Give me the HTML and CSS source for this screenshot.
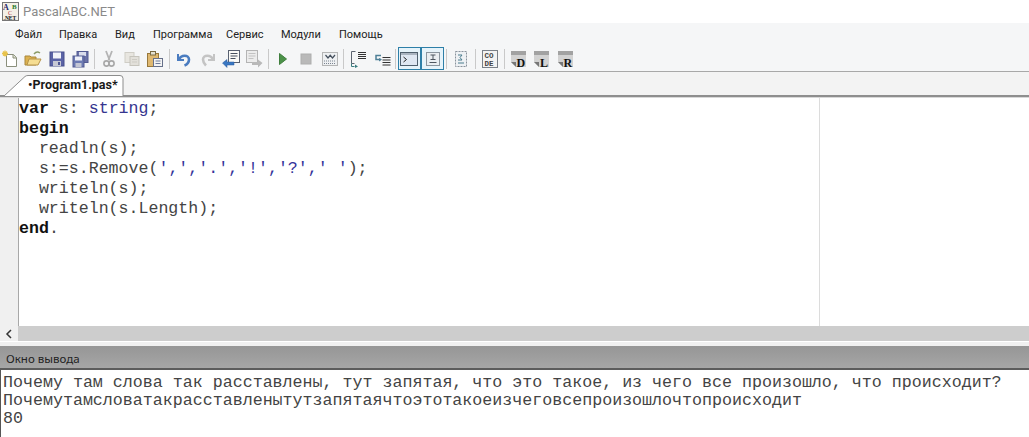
FILE: index.html
```html
<!DOCTYPE html>
<html lang="ru">
<head>
<meta charset="utf-8">
<title>PascalABC.NET</title>
<link rel="stylesheet" href="styles.css">
</head>
<body>
<div class="app">
  <header class="titlebar">
    <svg class="app-icon" width="18" height="19" viewBox="0 0 18 19">
      <rect x="0.5" y="0.5" width="16" height="18" fill="#f4f0e6" stroke="#777"/>
      <text x="1" y="8" class="logo-a">A</text>
      <text x="10" y="7" class="logo-b">B</text>
      <text x="6" y="13" class="logo-c">C</text>
      <text x="1.5" y="18" class="logo-net">.NET</text>
    </svg>
    <span class="app-name">PascalABC.NET</span>
  </header>

  <nav class="menubar">
    <span class="menu-item m1">Файл</span>
    <span class="menu-item m2">Правка</span>
    <span class="menu-item m3">Вид</span>
    <span class="menu-item m4">Программа</span>
    <span class="menu-item m5">Сервис</span>
    <span class="menu-item m6">Модули</span>
    <span class="menu-item m7">Помощь</span>
  </nav>

  <div class="toolbar">
    <span class="tool first"><svg width="18" height="18" viewBox="0 0 18 18"><path d="M5.500 4.500h7l3 3v9h-10z" fill="#fff" stroke="#8a8f7c"/><path d="M12 4.500v3.500h3.500" fill="#dfe3d0" stroke="#8a8f7c"/><path d="M4 .5v6M1 3.500h6M2 1.500l4 4M6 1.500l-4 4" stroke="#e8c34c" stroke-width="1.300"/></svg></span>
    <span class="tool"><svg width="18" height="18" viewBox="0 0 18 18"><path d="M1 6h5l1 1h5v8H1z" fill="#dcb150" stroke="#a8873c"/><path d="M3 15l2-6h12l-3 6z" fill="#f5dd92" stroke="#b5934a"/><path d="M10 4c2-2.500 4-2.500 6-1" fill="none" stroke="#8a9a68" stroke-width="1.400"/></svg></span>
    <span class="tool"><svg width="18" height="18" viewBox="0 0 18 18"><rect x="2" y="2" width="14" height="14" fill="#5a63a6" stroke="#474f8c"/><rect x="5" y="2.500" width="8" height="6" fill="#f2f4fa"/><rect x="5" y="11" width="8" height="5" fill="#c7c9d4"/><rect x="10" y="12" width="2" height="3" fill="#505894"/></svg></span>
    <span class="tool"><svg width="18" height="18" viewBox="0 0 18 18"><rect x="6" y="1.500" width="11" height="11" fill="#6a72a8" stroke="#525a92"/><rect x="8" y="2" width="7" height="4" fill="#d8dcec"/><rect x="2" y="6" width="11" height="11" fill="#6c7ab2" stroke="#525a92"/><rect x="4" y="6.500" width="7" height="4" fill="#eef0f8"/><rect x="4.500" y="13" width="6" height="4" fill="#c3c6d4"/></svg></span>
    <span class="sep"></span>
    <span class="tool"><svg width="18" height="18" viewBox="0 0 18 18"><path d="M6 1l3.500 9M12 1L8.500 10" stroke="#b4b4b4" stroke-width="1.800" fill="none"/><circle cx="6.500" cy="13.500" r="2.600" fill="none" stroke="#a8a8a8" stroke-width="1.600"/><circle cx="11.500" cy="13.500" r="2.600" fill="none" stroke="#a8a8a8" stroke-width="1.600"/></svg></span>
    <span class="tool"><svg width="18" height="18" viewBox="0 0 18 18"><rect x="2" y="2.500" width="9" height="10" fill="#e8e6e0" stroke="#cfcdc6"/><rect x="7" y="6.500" width="9" height="9" fill="#e2e0da" stroke="#c6c4bc"/><path d="M9 9.500h5M9 12h5" stroke="#cdcbc4"/></svg></span>
    <span class="tool"><svg width="18" height="18" viewBox="0 0 18 18"><rect x="1.500" y="3.500" width="11" height="13" fill="#dfb870" stroke="#97783c"/><rect x="4.500" y="1.500" width="5" height="3.500" fill="#e4e0d0" stroke="#7a6a42"/><rect x="7.500" y="8.500" width="9" height="8" fill="#f4f4f4" stroke="#66708a"/><path d="M9.500 11h5M9.500 13.500h5" stroke="#6d7a98"/></svg></span>
    <span class="sep"></span>
    <span class="tool"><svg width="18" height="18" viewBox="0 0 18 18"><path d="M3 4v6h6" fill="none" stroke="#4a7cc0" stroke-width="2"/><path d="M4 9.500C6 4.500 14 4.500 14 9.500c0 3-2 5-4.500 6" fill="none" stroke="#4a7cc0" stroke-width="2.600"/></svg></span>
    <span class="tool"><svg width="18" height="18" viewBox="0 0 18 18"><path d="M15 4v6H9" fill="none" stroke="#c4c4c4" stroke-width="2"/><path d="M14 9.500C12 4.500 4 4.500 4 9.500c0 3 1 4 3 6" fill="none" stroke="#c4c4c4" stroke-width="2.600"/></svg></span>
    <span class="tool"><svg width="18" height="18" viewBox="0 0 18 18"><rect x="6.500" y=".5" width="11" height="12" fill="#fbfbf8" stroke="#5a6272"/><path d="M8.500 3.500h7M8.500 6h7M8.500 8.500h5" stroke="#48505f"/><path d="M.5 13L5 9.500V12h7v3H5v2.500z" fill="#3a78c2" stroke="#2a5a9c" stroke-width=".5"/></svg></span>
    <span class="tool"><svg width="18" height="18" viewBox="0 0 18 18"><rect x="1.500" y=".5" width="11" height="12" fill="#ececec" stroke="#b4b4b4"/><path d="M3.500 3.500h7M3.500 6h7M3.500 8.500h5" stroke="#c2c2c2"/><path d="M17.500 13L13 9.500V12H7v3h6v2.500z" fill="#b9b9b9"/></svg></span>
    <span class="sep"></span>
    <span class="tool"><svg width="18" height="18" viewBox="0 0 18 18"><path d="M5.500 3.500l7 5.500-7 5.500z" fill="#4b9148" stroke="#3f7e3d"/></svg></span>
    <span class="tool"><svg width="18" height="18" viewBox="0 0 18 18"><rect x="4" y="4" width="10" height="10" fill="#b9b9b9" stroke="#aeaeae"/></svg></span>
    <span class="tool"><svg width="18" height="18" viewBox="0 0 18 18"><rect x="1.500" y="2.500" width="15" height="13" fill="#eef0f2" stroke="#777" stroke-dasharray="1 1"/><path d="M4.500 5l2.500 3 2.500-3M9 5l2.500 3L14 5" fill="none" stroke="#45505e" stroke-width="1.200"/><path d="M3 11h12M3 13.500h12" stroke="#7b8490" stroke-dasharray="1 1"/></svg></span>
    <span class="sep"></span>
    <span class="tool"><svg width="18" height="18" viewBox="0 0 18 18"><path d="M6.500 1.500h-4v12h3" fill="none" stroke="#5c6470"/><path d="M9 2.500h8M9 4.500h8M9 6.500h8M9 8.500h8" stroke="#333"/><path d="M2.500 13.500v3h3" fill="none" stroke="#3b7d80"/><path d="M6 14.500l3 2-3 1.500z" fill="#3b7d80"/></svg></span>
    <span class="tool"><svg width="18" height="18" viewBox="0 0 18 18"><path d="M8 5.500H3v4h5" fill="none" stroke="#4d7f96" stroke-width="1.500"/><path d="M6 8l3 1.500L6 11.500z" fill="#4d7f96"/><path d="M9.500 7.500h8M9.500 10h8M9.500 12.500h8M9.500 15h8" stroke="#333"/></svg></span>
    <span class="sep"></span>
    <span class="tool on wide"><svg width="18" height="18" viewBox="0 0 18 18"><rect x=".5" y="2.500" width="17" height="13" fill="#dfe7f2" stroke="#50606e"/><rect x="1" y="3" width="16" height="2" fill="#aab4c0"/><path d="M3.500 7l3 2.500-3 2.500" fill="none" stroke="#222"/></svg></span>
    <span class="tool on"><svg width="18" height="18" viewBox="0 0 18 18"><rect x="2.500" y="2.500" width="13" height="13" fill="#e9eef2" stroke="#8a96a0"/><path d="M6.500 5h5M9 5v4.500M6.500 9.500h5M5.500 12.500h7" stroke="#4d5660"/></svg></span>
    <span class="sep"></span>
    <span class="tool"><svg width="18" height="18" viewBox="0 0 18 18"><rect x="3.500" y="1.500" width="11" height="15" fill="#eef1f4" stroke="#8a939c" stroke-dasharray="2 1"/><path d="M6 5h4l-2 2.500 2 2.500H6M6 13h6" fill="none" stroke="#4a7c8e"/></svg></span>
    <span class="sep"></span>
    <span class="tool"><svg width="18" height="18" viewBox="0 0 18 18"><rect x="1.500" y=".5" width="15" height="17" fill="#f3f3f3" stroke="#7a8088"/><text x="3.500" y="8" class="code-t">CO</text><text x="3.500" y="16" class="code-t">DE</text></svg></span>
    <span class="sep"></span>
    <span class="tool"><svg width="18" height="18" viewBox="0 0 18 18"><path d="M1 1h15v16H6l-5-5z" fill="#d2d2d2"/><path d="M1 1h15v4H1z" fill="#a2a2a2"/><path d="M1 12h5v5z" fill="#777"/><text x="6.500" y="16.500" class="letter">D</text></svg></span>
    <span class="tool"><svg width="18" height="18" viewBox="0 0 18 18"><path d="M1 1h15v16H6l-5-5z" fill="#d2d2d2"/><path d="M1 1h15v4H1z" fill="#a2a2a2"/><path d="M1 12h5v5z" fill="#777"/><text x="7" y="16.500" class="letter">L</text></svg></span>
    <span class="tool"><svg width="18" height="18" viewBox="0 0 18 18"><path d="M1 1h15v16H6l-5-5z" fill="#d2d2d2"/><path d="M1 1h15v4H1z" fill="#a2a2a2"/><path d="M1 12h5v5z" fill="#777"/><text x="6.500" y="16.500" class="letter">R</text></svg></span>
  </div>

  <div class="tabstrip">
    <div class="tab">
      <svg class="tab-shape" width="120" height="21" viewBox="0 0 120 21"><path d="M0 21L21 1.500Q22 .5 24 .5H116Q119 .5 119 3.500V21" fill="#fff" stroke="#8d8d8d"/></svg>
      <span class="tab-label">•Program1.pas*</span>
    </div>
  </div>

  <main class="editor">
    <div class="gutter"></div>
    <pre class="code"><b>var</b> s: <span class="type">string</span>;
<b>begin</b>
  readln(s);
  s:=s.Remove(<span class="str">',','.','!','?',' '</span>);
  writeln(s);
  writeln(s.Length);
<b>end</b>.</pre>
    <div class="right-pane"></div>
  </main>

  <div class="hscroll"><span class="arrow"><svg width="8" height="10" viewBox="0 0 8 10"><path d="M6 1L2 5l4 4" fill="none" stroke="#333" stroke-width="1.500"/></svg></span></div>
  <div class="splitter"></div>
  <div class="output-head">Окно вывода</div>
  <pre class="output">Почему там слова так расставлены, тут запятая, что это такое, из чего все произошло, что происходит?
Почемутамсловатакрасставленытутзапятаячтоэтотакоеизчеговсепроизошлочтопроисходит
80</pre>
</div>
</body>
</html>
```
FILE: styles.css
```css
* { box-sizing: border-box; }
html, body { margin: 0; padding: 0; }
body { background: #fff; overflow: hidden; }
.app { width: 1029px; height: 437px; display: flex; flex-direction: column; overflow: hidden; font-family: Roboto, "Noto Sans", sans-serif; }

.titlebar { height: 23px; display: flex; align-items: center; padding-left: 2px; background: #fff; flex: none; }
.app-icon { margin-right: 3px; }
.app-name { font-size: 13px; color: #8a8a8a; }
.logo-a, .logo-b, .logo-net { font-family: "Liberation Serif", serif; font-weight: bold; }
.logo-a { font-size: 8px; fill: #1d1d6a; }
.logo-b { font-size: 7px; fill: #2a7a2a; }
.logo-c { font-size: 6px; fill: #b03030; font-family: "Liberation Serif", serif; }
.logo-net { font-size: 5.500px; fill: #111; }

.menubar { height: 23px; flex: none; display: flex; align-items: center; background: #f5f6f7; font-size: 11px; color: #222; padding-left: 15px; }
.m1 { width: 44px; }
.m2 { width: 56px; }
.m3 { width: 38px; }
.m4 { width: 73px; }
.m5 { width: 55px; }
.m6 { width: 58px; }

.toolbar { height: 26px; flex: none; display: flex; align-items: center; background: #f5f6f7; border-bottom: 1px solid #a8a8a8; }
.tool { width: 23.300px; height: 24px; flex: none; display: flex; align-items: center; justify-content: center; }
.tool.first { margin-left: -1.500px; }
.tool.on { height: 23px; border: 1px solid #2d7fa8; background: #e6f3fa; }
.tool.wide { margin-left: -1px; }
.sep { width: 5.500px; height: 20px; flex: none; }
.sep::after { content: ""; display: block; width: 1px; height: 20px; margin-left: 2px; background: #c9c9c9; }
.code-t { font-family: "Liberation Mono", monospace; font-size: 7.500px; font-weight: bold; fill: #444; }
.letter { font-family: "Liberation Serif", serif; font-size: 12px; font-weight: bold; fill: #111; }

.tabstrip { height: 25px; flex: none; display: flex; align-items: flex-end; padding-left: 4px; background: #f3f3f3; border-bottom: 2px solid #8e8e8e; }
.tab { width: 120px; height: 21px; position: relative; margin-bottom: -1px; }
.tab-shape { position: absolute; left: 0; top: 0; }
.tab-label { position: absolute; left: 24px; top: 2px; font-size: 12.500px; font-weight: bold; color: #1a1a1a; line-height: 16px; }

.editor { height: 229px; flex: none; display: flex; background: #fff; border-top: 1px solid #d8d8d8; }
.gutter { width: 19px; flex: none; background: #f0f0f0; border-right: 1px solid #a8a8a8; }
.code { width: 801px; flex: none; margin: 0; padding: 1px 0 0 0; border-right: 1px solid #dcdcdc; font-family: "Liberation Mono", monospace; font-size: 16.600px; line-height: 20px; color: #444; }
.code b { color: #111; }
.type { color: #36368f; }
.str { color: #33339a; }
.right-pane { flex: 1; }

.hscroll { height: 15px; flex: none; background: #cdcdcd; display: flex; }
.arrow { width: 18px; background: #f0f0f0; display: flex; align-items: center; justify-content: center; }
.splitter { height: 5px; flex: none; background: #f0f0f0; border-top: 1px solid #fff; }
.output-head { height: 24px; flex: none; background: linear-gradient(#969696, #a6a6a6); font-size: 11.500px; color: #222; padding-left: 6px; line-height: 25px; border-bottom: 2px solid #5c5c5c; font-family: "Noto Sans", sans-serif; }
.output { flex: 1; margin: 0; padding: 4px 0 0 2px; background: #fff; border-left: 1px solid #555; font-family: "Liberation Mono", monospace; font-size: 16.650px; line-height: 18px; color: #444; }
```
